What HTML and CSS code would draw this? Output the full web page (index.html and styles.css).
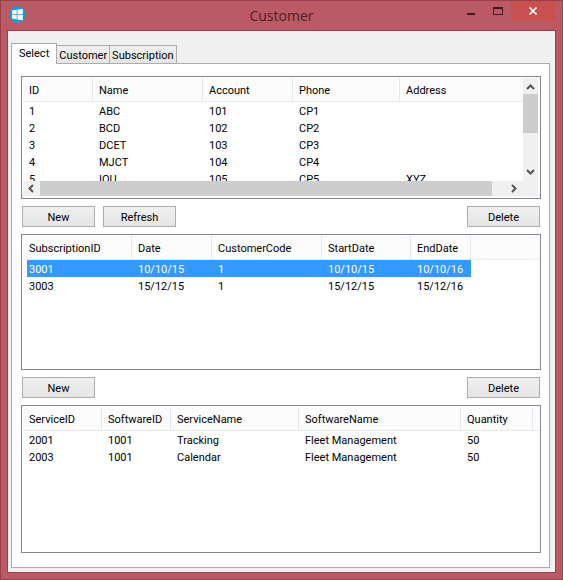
FILE: index.html
```html
<!DOCTYPE html>
<html lang="en">
<head>
<meta charset="utf-8">
<title>Customer</title>
<link rel="stylesheet" href="styles.css">
</head>
<body>
<div class="window">
  <header class="titlebar">
    <svg class="logo" viewBox="0 0 17 17" aria-hidden="true">
      <circle cx="8.500" cy="8.500" r="8.300" fill="#1c9ae0"/>
      <path fill="#fff" d="M3 4.500l4.700-.7v4.400H3zM8.500 3.700l5.300-.8v5.300H8.500zM3 9h4.700v4.300L3 12.600zM8.500 9h5.300v5.200l-5.300-.8z"/>
    </svg>
    <h1 class="title">Customer</h1>
    <div class="controls">
      <button class="control" type="button" aria-label="Minimize"><svg viewBox="0 0 12 10"><path fill="#3d1a1f" d="M2 7h8v2H2z"/></svg></button>
      <button class="control" type="button" aria-label="Maximize"><svg viewBox="0 0 12 10"><path fill="none" stroke="#3d1a1f" d="M1.500 2.500h9v6h-9z"/><path fill="#3d1a1f" d="M1 1h10v2H1z"/></svg></button>
      <button class="control close" type="button" aria-label="Close"><svg viewBox="0 0 12 10"><path fill="none" stroke="#fff" stroke-width="1.700" d="M2.500 1.500l7 7M9.500 1.500l-7 7"/></svg></button>
    </div>
  </header>
  <main class="client">
    <div class="tabs" role="tablist">
      <button class="tab active" role="tab" aria-selected="true" type="button">Select</button>
      <button class="tab" role="tab" aria-selected="false" type="button">Customer</button>
      <button class="tab" role="tab" aria-selected="false" type="button">Subscription</button>
    </div>
    <section class="panel" role="tabpanel">
      <div class="list customers">
        <div class="viewport">
          <table>
            <colgroup><col class="w70"><col class="w110"><col class="w90"><col class="w107"><col></colgroup>
            <thead><tr><th>ID</th><th>Name</th><th>Account</th><th>Phone</th><th>Address</th></tr></thead>
            <tbody>
              <tr><td>1</td><td>ABC</td><td>101</td><td>CP1</td><td></td></tr>
              <tr><td>2</td><td>BCD</td><td>102</td><td>CP2</td><td></td></tr>
              <tr><td>3</td><td>DCET</td><td>103</td><td>CP3</td><td></td></tr>
              <tr><td>4</td><td>MJCT</td><td>104</td><td>CP4</td><td></td></tr>
              <tr><td>5</td><td>IOU</td><td>105</td><td>CP5</td><td>XYZ</td></tr>
            </tbody>
          </table>
        </div>
        <div class="bar vertical">
          <button class="arrow" type="button" aria-label="Scroll up"><svg viewBox="0 0 15 16"><path d="M4 11l3.500-3.500L11 11"/></svg></button>
          <div class="track"><div class="thumb"></div></div>
          <button class="arrow" type="button" aria-label="Scroll down"><svg viewBox="0 0 15 16"><path d="M4 5l3.500 3.500L11 5"/></svg></button>
        </div>
        <div class="bar horizontal">
          <button class="arrow" type="button" aria-label="Scroll left"><svg viewBox="0 0 17 15"><path d="M10 4L6.500 7.500 10 11"/></svg></button>
          <div class="track"><div class="thumb"></div></div>
          <button class="arrow" type="button" aria-label="Scroll right"><svg viewBox="0 0 17 15"><path d="M6 4l3.500 3.500L6 11"/></svg></button>
        </div>
        <div class="corner"></div>
      </div>
      <div class="actions">
        <button class="button" type="button">New</button>
        <button class="button" type="button">Refresh</button>
        <button class="button last" type="button">Delete</button>
      </div>
      <div class="list subscriptions">
        <table>
          <colgroup><col class="w109"><col class="w80"><col class="w110"><col class="w89"><col class="w60"><col></colgroup>
          <thead><tr><th>SubscriptionID</th><th>Date</th><th>CustomerCode</th><th>StartDate</th><th>EndDate</th><th></th></tr></thead>
          <tbody>
            <tr class="selected"><td>3001</td><td>10/10/15</td><td>1</td><td>10/10/15</td><td>10/10/16</td><td></td></tr>
            <tr><td>3003</td><td>15/12/15</td><td>1</td><td>15/12/15</td><td>15/12/16</td><td></td></tr>
          </tbody>
        </table>
      </div>
      <div class="actions">
        <button class="button" type="button">New</button>
        <button class="button last" type="button">Delete</button>
      </div>
      <div class="list services">
        <table>
          <colgroup><col class="w79"><col class="w69"><col class="w128"><col class="w162"><col class="w72"><col></colgroup>
          <thead><tr><th>ServiceID</th><th>SoftwareID</th><th>ServiceName</th><th>SoftwareName</th><th>Quantity</th><th></th></tr></thead>
          <tbody>
            <tr><td>2001</td><td>1001</td><td>Tracking</td><td>Fleet Management</td><td>50</td><td></td></tr>
            <tr><td>2003</td><td>1001</td><td>Calendar</td><td>Fleet Management</td><td>50</td><td></td></tr>
          </tbody>
        </table>
      </div>
    </section>
  </main>
</div>
</body>
</html>
```
FILE: styles.css
```css
* { box-sizing: border-box; }

body {
  margin: 0;
  font: 11px/15px Roboto, "Liberation Sans", Arial, sans-serif;
  color: #000;
}

button { margin: 0; padding: 0; border: 0; font: inherit; color: inherit; }
svg { display: block; }

.window {
  display: flex;
  flex-direction: column;
  min-height: 100vh;
  padding: 0 6px 6px;
  border: 1px solid #98414b;
  background: #bb5964;
}

.titlebar {
  display: grid;
  grid-template-columns: 1fr auto 1fr;
  height: 29px;
}

.logo { width: 17px; height: 17px; margin: 5px 0 0 2px; }

.title {
  margin: 0;
  font: 14px/29px "Open Sans", sans-serif;
  color: #4d2027;
}

.controls { display: flex; justify-content: flex-end; padding-right: 1px; }
.control {
  display: grid;
  place-items: center;
  width: 27px;
  height: 20px;
  background: none;
}
.control svg { width: 12px; height: 10px; }
.close { width: 44px; background: #c75050; }

.client {
  display: flex;
  flex: 1;
  flex-direction: column;
  padding: 12px 5px 4px 3px;
  border: 1px solid #98414b;
  background: #f0f0f0;
}

.tabs { display: flex; align-items: flex-end; }
.tab {
  height: 18px;
  padding: 1px 2px 0;
  border: 1px solid #acacac;
  border-bottom: 0;
  border-left-width: 0;
  background: linear-gradient(#f0f0f0, #e5e5e5);
}
.tab.active {
  position: relative;
  height: 21px;
  margin-bottom: -1px;
  padding: 0 7px 1px;
  border-left-width: 1px;
  background: #fff;
}

.panel {
  display: flex;
  flex: 1;
  flex-direction: column;
  gap: 7px;
  padding: 12px 8px 14px 9px;
  border: 1px solid #acacac;
  background: #fff;
}

.list {
  padding: 1px;
  border: 1px solid #828790;
  overflow: hidden;
}
.customers {
  display: grid;
  grid-template: minmax(0, 1fr) 15px / minmax(0, 1fr) 15px;
  flex: 123 0 123px;
  padding-right: 2px;
  padding-bottom: 2px;
}
.subscriptions { flex: 136 0 136px; }
.services { flex: 148 0 148px; }
.viewport { overflow: hidden; }

table { width: 100%; table-layout: fixed; border-collapse: separate; border-spacing: 0; }
th, td { padding: 2px 0 0 6px; text-align: left; font-weight: normal; white-space: nowrap; }
th {
  height: 24px;
  border-right: 1px solid #e3e8f0;
  border-bottom: 1px solid #e8eaf0;
  background: #fcfcfd;
}
th:last-child { border-right: 0; }
td { height: 17px; }
td:first-child {
  padding-left: 2px;
  border-left: 4px solid transparent;
  background-clip: padding-box;
}
.selected td:not(:last-child) { background-color: #3399ff; color: #fff; }

.w60 { width: 60px; }
.w69 { width: 69px; }
.w70 { width: 70px; }
.w72 { width: 72px; }
.w79 { width: 79px; }
.w80 { width: 80px; }
.w89 { width: 89px; }
.w90 { width: 90px; }
.w107 { width: 107px; }
.w109 { width: 109px; }
.w110 { width: 110px; }
.w128 { width: 128px; }
.w162 { width: 162px; }

.bar { display: flex; background: #f0f0f0; }
.vertical { flex-direction: column; }
.track { display: flex; flex: 1; flex-direction: inherit; }
.thumb { background: #cdcdcd; }
.vertical .thumb { height: 55%; }
.horizontal .thumb { width: 97%; }
.arrow { background: none; }
.arrow path { fill: none; stroke: #555; stroke-width: 2; }
.vertical svg { width: 15px; height: 16px; }
.horizontal svg { width: 17px; height: 15px; }
.corner { background: #f0f0f0; }

.actions { display: flex; gap: 8px; padding: 0 1px; }
.button {
  width: 73px;
  height: 21px;
  padding-top: 1px;
  border: 1px solid #acacac;
  background: linear-gradient(#f0f0f0, #e5e5e5);
}
.last { margin-left: auto; }
```
